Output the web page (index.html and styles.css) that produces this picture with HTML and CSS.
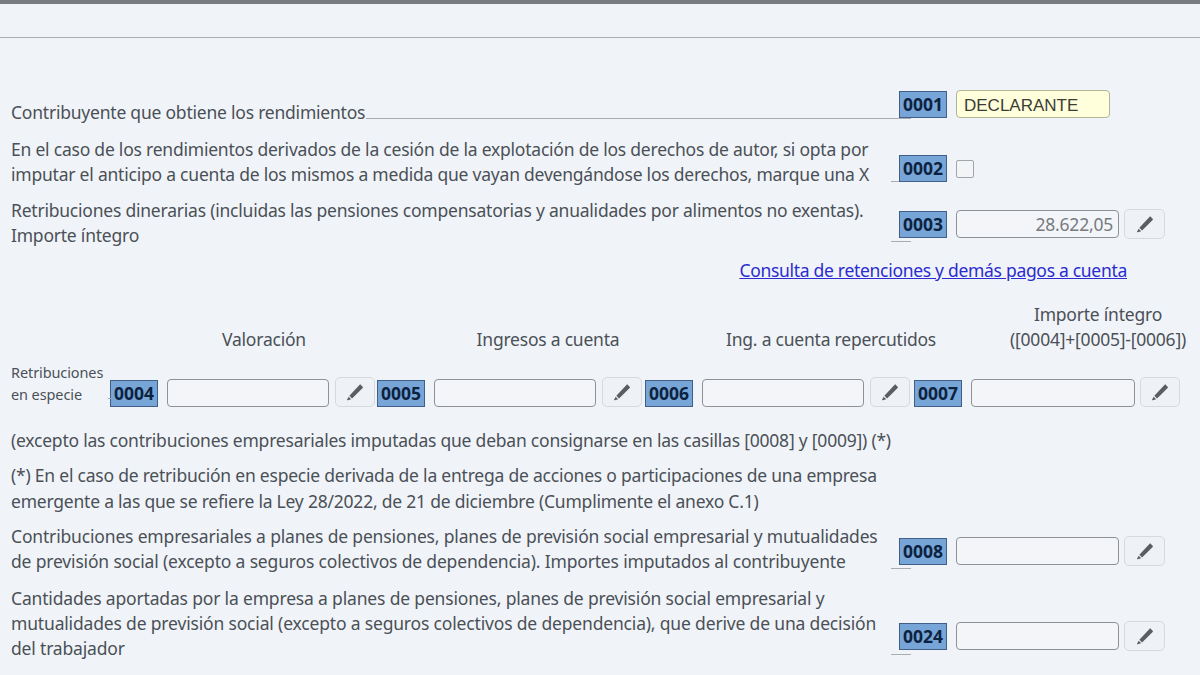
FILE: index.html
```html
<!DOCTYPE html>
<html lang="es">
  <head>
    <meta charset="UTF-8" />
    <title>Rendimientos del trabajo</title>
    <link rel="stylesheet" href="styles.css">
  </head>
  <body>
    <div class="top-bar"></div>
    <div class="sub-bar"></div>

    <div class="form">
      <div class="row row-1">
        <div class="label">
          <p class="text">Contribuyente que obtiene los rendimientos</p>
          <span class="leader"></span>
        </div>
        <div class="controls">
          <span class="code">0001</span>
          <div class="select-box">DECLARANTE</div>
        </div>
      </div>

      <div class="row row-2">
        <div class="label">
          <p class="text">En el caso de los rendimientos derivados de la cesión de la explotación de los derechos de autor, si opta por imputar el anticipo a cuenta de los mismos a medida que vayan devengándose los derechos, marque una X</p>
          <span class="leader"></span>
        </div>
        <div class="controls">
          <span class="code">0002</span>
          <span class="checkbox"></span>
        </div>
      </div>

      <div class="row row-3">
        <div class="label">
          <p class="text">Retribuciones dinerarias (incluidas las pensiones compensatorias y anualidades por alimentos no exentas). Importe íntegro</p>
          <span class="leader"></span>
        </div>
        <div class="controls">
          <span class="code">0003</span>
          <div class="input">28.622,05</div>
          <button class="edit-btn"><svg viewBox="0 0 16 16"><use href="#pencil"/></svg></button>
        </div>
      </div>

      <div class="link-row">
        <a href="#" class="link">Consulta de retenciones y demás pagos a cuenta</a>
      </div>

      <div class="species-head">
        <span class="head-cell">Valoración</span>
        <span class="head-cell">Ingresos a cuenta</span>
        <span class="head-cell">Ing. a cuenta repercutidos</span>
        <span class="head-cell head-last">Importe íntegro<br>([0004]+[0005]-[0006])</span>
      </div>

      <div class="species-row">
        <div class="species-label">Retribuciones<br>en especie</div>
        <div class="species-cell">
          <span class="code">0004</span>
          <div class="input"></div>
          <button class="edit-btn"><svg viewBox="0 0 16 16"><use href="#pencil"/></svg></button>
        </div>
        <div class="species-cell">
          <span class="code">0005</span>
          <div class="input"></div>
          <button class="edit-btn"><svg viewBox="0 0 16 16"><use href="#pencil"/></svg></button>
        </div>
        <div class="species-cell">
          <span class="code">0006</span>
          <div class="input"></div>
          <button class="edit-btn"><svg viewBox="0 0 16 16"><use href="#pencil"/></svg></button>
        </div>
        <div class="species-cell">
          <span class="code">0007</span>
          <div class="input"></div>
          <button class="edit-btn"><svg viewBox="0 0 16 16"><use href="#pencil"/></svg></button>
        </div>
      </div>

      <p class="note note-1">(excepto las contribuciones empresariales imputadas que deban consignarse en las casillas [0008] y [0009]) (*)</p>
      <p class="note note-2">(*) En el caso de retribución en especie derivada de la entrega de acciones o participaciones de una empresa emergente a las que se refiere la Ley 28/2022, de 21 de diciembre (Cumplimente el anexo C.1)</p>

      <div class="row row-8">
        <div class="label">
          <p class="text">Contribuciones empresariales a planes de pensiones, planes de previsión social empresarial y mutualidades de previsión social (excepto a seguros colectivos de dependencia). Importes imputados al contribuyente</p>
          <span class="leader"></span>
        </div>
        <div class="controls">
          <span class="code">0008</span>
          <div class="input"></div>
          <button class="edit-btn"><svg viewBox="0 0 16 16"><use href="#pencil"/></svg></button>
        </div>
      </div>

      <div class="row row-24">
        <div class="label">
          <p class="text">Cantidades aportadas por la empresa a planes de pensiones, planes de previsión social empresarial y mutualidades de previsión social (excepto a seguros colectivos de dependencia), que derive de una decisión del trabajador</p>
          <span class="leader"></span>
        </div>
        <div class="controls">
          <span class="code">0024</span>
          <div class="input"></div>
          <button class="edit-btn"><svg viewBox="0 0 16 16"><use href="#pencil"/></svg></button>
        </div>
      </div>
    </div>

    <svg class="defs" width="0" height="0">
      <symbol id="pencil" viewBox="0 0 16 16">
        <path d="M12.6 1.2l2.2 2.1c.4.4.4.8 0 1.2L5.4 13.8 3 11.4z" fill="#5a5d61"/>
        <path d="M2.4 12.2l2.2 2.2-3.1 1c-.4.1-.7-.2-.6-.6z" fill="#5a5d61"/>
      </symbol>
    </svg>
  </body>
</html>
```

FILE: styles.css
```css
html,
body {
  margin: 0;
  padding: 0;
  height: 675px;
  overflow: hidden;
}

body {
  font-family: "Noto Sans", sans-serif;
  font-size: 17.5px;
  letter-spacing: -0.22px;
  line-height: 25px;
  color: #4b5056;
  background-color: #f0f4f9;
}

.top-bar {
  height: 4px;
  background-color: #7a7b80;
}

.sub-bar {
  height: 33px;
  border-bottom: 1.5px solid #a9adb2;
}

.form {
  padding: 52px 0 0 11px;
}

/* filas con casilla a la derecha */
.row {
  display: flex;
  align-items: flex-start;
}

.label {
  display: flex;
  width: 888px;
  flex-shrink: 0;
}

.text {
  margin: 0;
  width: 868px;
  flex-shrink: 0;
}

.leader {
  flex: 1;
  height: 1px;
  margin-left: 12px;
  margin-right: -12px;
  background-color: #a9adb2;
}

.controls {
  display: flex;
  align-items: center;
}

.row-1 { padding-top: 10px; }
.row-1 .text { width: auto; }
.row-1 .leader { margin-top: 18px; margin-left: 1px; }
.row-1 .controls { margin-top: -10px; }

.row-2 { margin-top: 12px; }
.row-2 .leader { margin-top: 44px; }
.row-2 .controls { margin-top: 18px; }

.row-3 { margin-top: 11px; }
.row-3 .leader { margin-top: 43px; }
.row-3 .controls { margin-top: 11px; }

.row-8 { margin-top: 10px; }
.row-8 .text { letter-spacing: -0.17px; }
.row-8 .leader { margin-top: 44px; }
.row-8 .controls { margin-top: 12px; }

.row-24 { margin-top: 12px; }
.row-24 .text { letter-spacing: -0.17px; }
.row-24 .leader { margin-top: 68px; }
.row-24 .controls { margin-top: 35px; }

.code {
  display: block;
  box-sizing: border-box;
  width: 48px;
  height: 27px;
  line-height: 25px;
  text-align: center;
  font-weight: 700;
  font-size: 17.5px;
  letter-spacing: 0;
  color: #0c2340;
  background-color: #78a5d8;
  border: 1px solid #3f5f86;
  position: relative;
  flex-shrink: 0;
}

.select-box,
.input {
  box-sizing: border-box;
  height: 28px;
  border: 1px solid #8e9196;
  border-radius: 4px;
  margin-left: 9px;
  flex-shrink: 0;
}

.select-box {
  width: 154px;
  padding: 1px 0 0 7px;
  line-height: 27px;
  font-family: "Liberation Sans", sans-serif;
  font-size: 17px;
  letter-spacing: 0;
  color: #3c3c34;
  background-color: #ffffdc;
  border-color: #b5b29a;
}

.input {
  width: 163px;
  padding-right: 5px;
  line-height: 27px;
  text-align: right;
  color: #777b80;
  background-color: #f3f5f8;
}

.checkbox {
  display: block;
  box-sizing: border-box;
  width: 18px;
  height: 18px;
  margin-left: 9px;
  border: 1.5px solid #a2a5a9;
  border-radius: 2px;
  background-color: #f2f4f6;
}

.edit-btn {
  display: flex;
  align-items: center;
  justify-content: center;
  box-sizing: border-box;
  width: 41px;
  height: 30px;
  margin-left: 5px;
  padding: 0;
  border: 1px solid #d6d9dd;
  border-radius: 5px;
  background-color: #eef1f5;
  flex-shrink: 0;
}

.edit-btn svg {
  width: 18px;
  height: 18px;
}

.link-row {
  margin-top: 10px;
  padding-right: 73px;
  text-align: right;
}

.link {
  color: #2b2bd0;
  letter-spacing: -0.3px;
}

/* retribuciones en especie */
.species-head {
  display: grid;
  grid-template-columns: 252px 316px 250px 196px;
  align-items: end;
  margin-top: 17px;
  padding-left: 127px;
  height: 52px;
}

.head-cell {
  text-align: center;
}

.head-last {
  margin-left: 44px;
  width: 196px;
}

.species-row {
  display: grid;
  grid-template-columns: 99px 267px 268px 269px 268px;
  align-items: end;
  margin-top: 9px;
}

.species-label {
  padding-bottom: 2px;
  font-size: 14.5px;
  line-height: 22px;
  letter-spacing: -0.1px;
}

.species-cell {
  display: flex;
  align-items: flex-end;
}

.species-cell .input {
  width: 162px;
}

.species-cell .edit-btn {
  width: 40px;
  margin-left: 6px;
}

.species-cell:last-child .input {
  width: 164px;
}

.species-cell:last-child .edit-btn {
  margin-left: 5px;
}

.species-cell:nth-child(2) .code::before {
  content: "";
  position: absolute;
  left: -3px;
  bottom: 7px;
  width: 3px;
  height: 1px;
  background-color: #a9adb2;
}

.note {
  margin: 0;
}

.note-1 {
  margin-top: 21px;
}

.note-2 {
  margin-top: 9px;
  width: 880px;
  line-height: 26px;
}

.defs {
  position: absolute;
}
```
